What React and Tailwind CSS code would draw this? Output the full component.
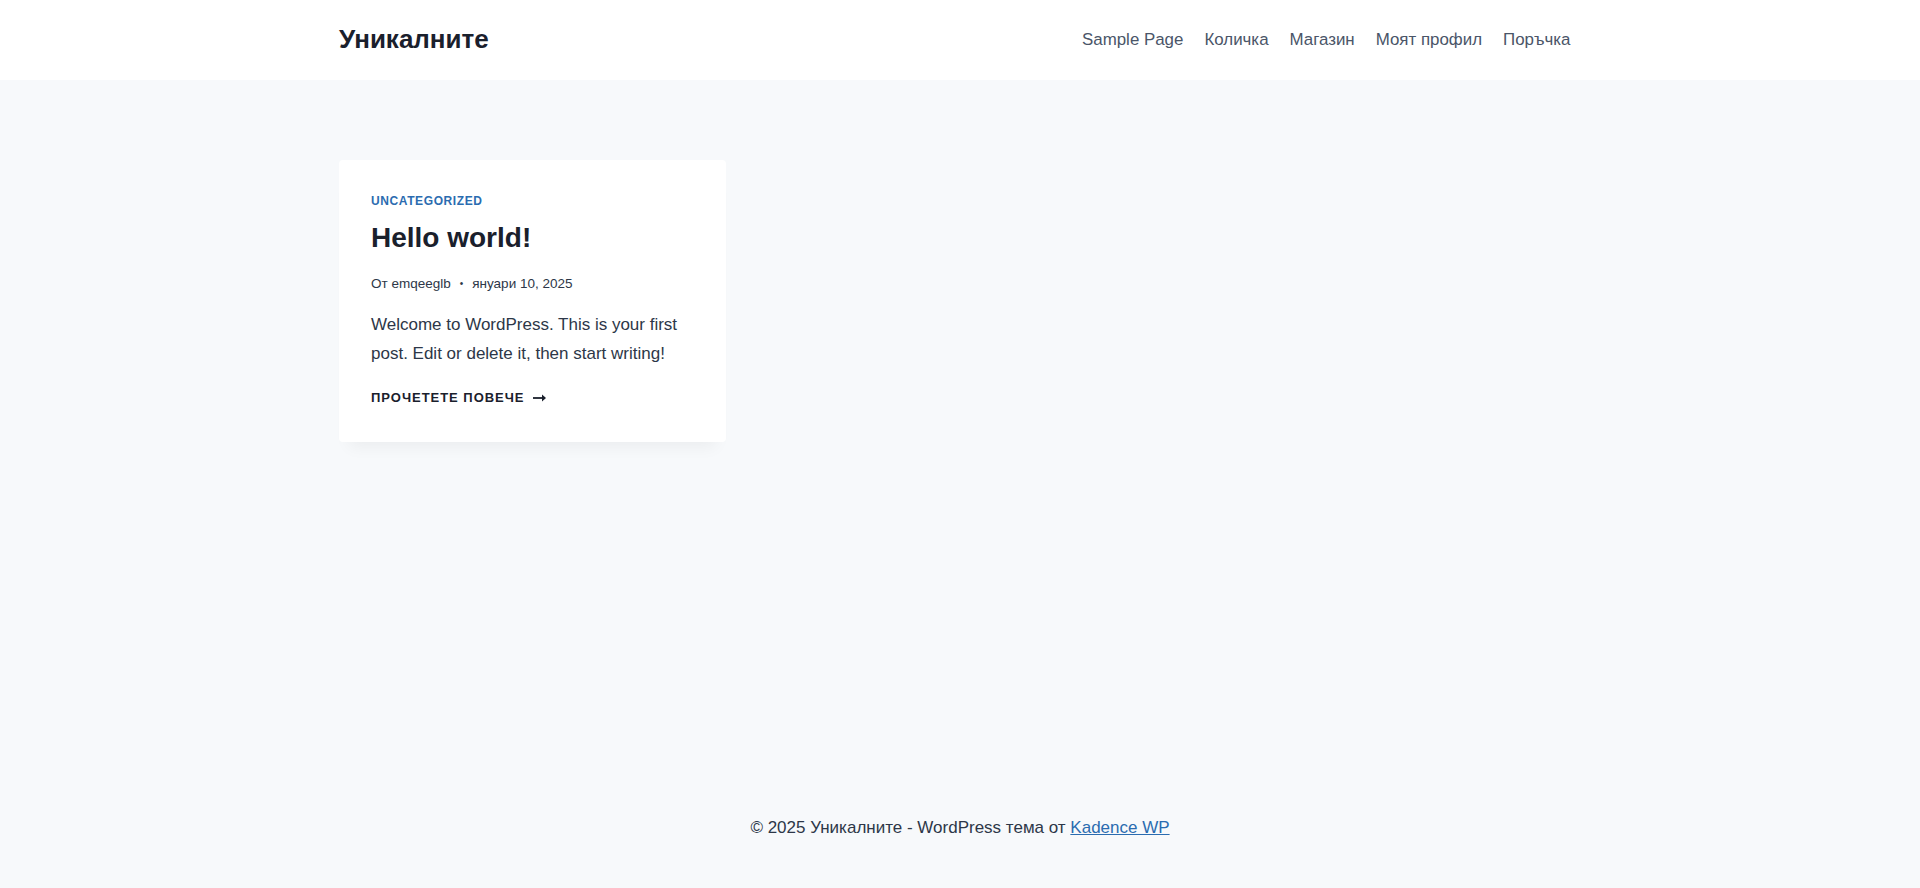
import React from "react";

const navItems = ["Sample Page", "Количка", "Магазин", "Моят профил", "Поръчка"];

const posts = [
  {
    category: "Uncategorized",
    title: "Hello world!",
    author: "emqeeglb",
    date: "януари 10, 2025",
    excerpt:
      "Welcome to WordPress. This is your first post. Edit or delete it, then start writing!",
  },
];

const ArrowRight = () => (
  <svg width="14" height="10" viewBox="0 0 14 10" className="ml-[8px]" aria-hidden="true">
    <path d="M0 5h11.5" stroke="#1A202C" strokeWidth="1.8" fill="none" />
    <path d="M9 1.5 13 5 9 8.5Z" fill="#1A202C" />
  </svg>
);

const App = () => {
  return (
    <div
      className="min-h-[888px] flex flex-col bg-[#F7F9FB] text-[#2D3748]"
      style={{ fontFamily: '"Liberation Sans", Arial, sans-serif' }}
    >
      {/* header */}
      <header className="bg-white h-[80px]">
        <div className="max-w-[1290px] mx-auto px-6 h-full flex items-center justify-between">
          <a className="text-[26px] font-bold text-[#1A202C] leading-none mb-[2px]">Уникалните</a>
          <nav className="flex items-center">
            {navItems.map((item) => (
              <a key={item} className="px-[10.5px] text-[16.9px] text-[#4A5568] leading-[1.6]">
                {item}
              </a>
            ))}
          </nav>
        </div>
      </header>

      {/* posts */}
      <main className="flex-1 pt-[80px]">
        <div className="max-w-[1290px] mx-auto px-6 grid grid-cols-3 gap-10">
          {posts.map((post) => (
            <article
              key={post.title}
              className="bg-white rounded shadow-[0px_15px_15px_-10px_rgba(0,0,0,0.05)] px-8 pt-[32px] pb-[34px]"
            >
              <div className="text-[12px] font-bold uppercase tracking-[0.6px] text-[#2B6CB0] leading-[19px] mb-[6px]">
                {post.category}
              </div>
              <h2 className="text-[28px] font-bold text-[#1A202C] leading-[42px]">{post.title}</h2>
              <div className="mt-[14px] flex items-center text-[13.5px] leading-[22px] text-[#2D3748]">
                <span>От {post.author}</span>
                <span className="mx-[9px] text-[10px]">•</span>
                <span>{post.date}</span>
              </div>
              <p className="mt-[15px] text-[17px] leading-[29px]">{post.excerpt}</p>
              <a className="mt-[20px] flex items-center text-[13px] font-bold uppercase tracking-[0.075em] text-[#1A202C] leading-[20px]">
                Прочетете повече
                <ArrowRight />
              </a>
            </article>
          ))}
        </div>
      </main>

      {/* footer */}
      <footer className="h-[120px] flex items-center justify-center text-[17px] leading-[1.6] text-[#2D3748]">
        <p>
          © 2025 Уникалните - WordPress тема от{" "}
          <a className="text-[#2B6CB0] underline">Kadence WP</a>
        </p>
      </footer>
    </div>
  );
};

export default App;
